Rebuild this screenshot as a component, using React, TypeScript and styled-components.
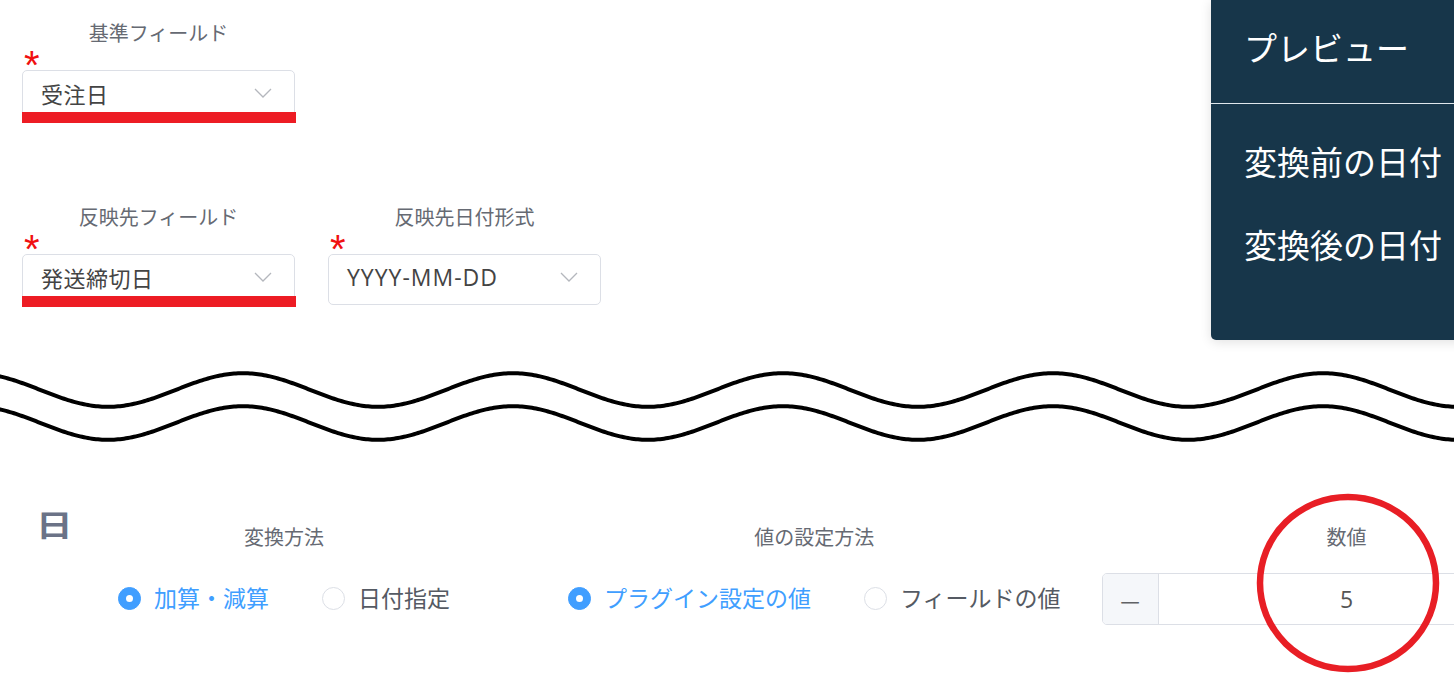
import React from 'react';
import styled, { createGlobalStyle } from 'styled-components';

const blue = '#409eff';
const borderGray = '#dcdfe6';
const labelGray = '#666a73';
const markRed = '#ed1c24';

const GlobalStyle = createGlobalStyle`
  html, body {
    margin: 0;
    padding: 0;
    background: #ffffff;
    overflow: hidden;
  }
  body {
    font-family: 'Noto Sans CJK JP', 'Noto Sans', sans-serif;
  }
`;

const Page = styled.div`
  position: relative;
  width: 1454px;
  height: 696px;
  overflow: hidden;
  background: #ffffff;
`;

const TopForm = styled.div`
  display: flex;
  flex-direction: column;
  gap: 84px;
  padding: 21px 0 0 22px;
`;

const FieldRow = styled.div`
  display: flex;
  gap: 33px;
`;

const Field = styled.div`
  display: flex;
  flex-direction: column;
  width: 273px;
`;

const FieldLabel = styled.div`
  font-size: 20px;
  line-height: 24px;
  color: ${labelGray};
  text-align: center;
`;

const Required = styled.div`
  height: 25px;
  font-family: 'Liberation Sans', sans-serif;
  font-size: 40px;
  line-height: 40px;
  color: #f01010;
  padding-left: 2px;
  overflow: visible;
`;

const SelectBox = styled.div`
  position: relative;
  box-sizing: border-box;
  height: 51px;
  display: flex;
  align-items: center;
  justify-content: space-between;
  padding: 0 22px 5px 18px;
  border: 1px solid ${borderGray};
  border-radius: 5px;
  background: #ffffff;
  font-size: 22px;
  color: #444;
`;

const SelectText = styled.span<{ $latin?: boolean }>`
  font-family: ${p => (p.$latin ? "'Open Sans', 'Noto Sans', sans-serif" : 'inherit')};
  font-size: ${p => (p.$latin ? '23px' : '22px')};
  letter-spacing: ${p => (p.$latin ? '1px' : '0.5px')};
`;

const RedBar = styled.div`
  position: absolute;
  left: -1px;
  right: -2px;
  bottom: -3px;
  height: 11px;
  background: ${markRed};
`;

const Chevron = () => (
  <svg width="18" height="10" viewBox="0 0 18 10">
    <path d="M1 1 L9 9 L17 1" fill="none" stroke="#b4b7bd" strokeWidth="1.3" />
  </svg>
);

const Preview = styled.div`
  position: absolute;
  top: 0;
  left: 1211px;
  width: 320px;
  height: 340px;
  background: #17364a;
  border-bottom-left-radius: 5px;
  box-shadow: 0 2px 12px rgba(0, 0, 0, 0.12);
  color: #ffffff;
`;

const PreviewHead = styled.div`
  height: 104px;
  padding: 25px 0 0 33px;
  box-sizing: border-box;
  border-bottom: 1px solid #dfe7ec;
  font-size: 33px;
  line-height: 44px;
`;

const PreviewBody = styled.div`
  display: flex;
  flex-direction: column;
  gap: 39px;
  padding: 35px 0 0 33px;
  font-size: 33px;
  line-height: 44px;
`;

const WaveSvg = styled.svg`
  display: block;
  margin-top: 55px;
`;

const BottomRow = styled.div`
  display: flex;
  align-items: flex-start;
  padding: 58px 0 0 36px;
`;

const DayHeading = styled.div`
  width: 30px;
  font-size: 30px;
  font-weight: 700;
  line-height: 30px;
  color: #6b7387;
  transform: scaleX(1.22);
  transform-origin: left center;
`;

const Column = styled.div<{ $ml: number; $width?: number }>`
  display: flex;
  flex-direction: column;
  align-items: center;
  gap: 24px;
  margin-top: 17px;
  margin-left: ${p => p.$ml}px;
  ${p => (p.$width ? `width: ${p.$width}px; flex-shrink: 0;` : '')}
`;

const ColumnLabel = styled.div`
  font-size: 20px;
  line-height: 24px;
  color: ${labelGray};
`;

const RadioGroup = styled.div`
  display: flex;
  align-items: center;
  height: 52px;
  gap: 53px;
`;

const RadioOption = styled.label<{ $checked?: boolean }>`
  display: flex;
  align-items: center;
  gap: 13px;
  font-size: 23px;
  line-height: 30px;
  padding-bottom: 4px;
  color: ${p => (p.$checked ? blue : '#555a63')};
  white-space: nowrap;
`;

const RadioDot = styled.span<{ $checked?: boolean }>`
  box-sizing: border-box;
  width: 23px;
  height: 23px;
  margin-top: 3px;
  border-radius: 50%;
  border: 1px solid ${p => (p.$checked ? blue : borderGray)};
  background: ${p => (p.$checked ? blue : '#ffffff')};
  display: flex;
  align-items: center;
  justify-content: center;

  &::after {
    content: '';
    width: 7px;
    height: 7px;
    border-radius: 50%;
    background: #ffffff;
    display: ${p => (p.$checked ? 'block' : 'none')};
  }
`;

const NumberInput = styled.div`
  box-sizing: border-box;
  display: flex;
  width: 490px;
  height: 52px;
  border: 1px solid ${borderGray};
  border-radius: 5px;
  overflow: hidden;
`;

const StepButton = styled.div<{ $side: 'left' | 'right' }>`
  width: 55px;
  flex-shrink: 0;
  display: flex;
  align-items: center;
  justify-content: center;
  background: #f5f7fa;
  ${p => (p.$side === 'left' ? `border-right: 1px solid ${borderGray};` : `border-left: 1px solid ${borderGray};`)}
  color: #606266;
  font-size: 22px;
`;

const NumberValue = styled.div`
  flex: 1;
  display: flex;
  align-items: center;
  justify-content: center;
  font-family: 'Open Sans', 'Noto Sans', sans-serif;
  font-size: 23px;
  color: #555;
`;

const Ellipse = styled.svg`
  position: absolute;
  left: 1250px;
  top: 488px;
  overflow: visible;
`;

const wavePath = (center: number, amp: number, period: number, peakX: number, width: number) => {
  const pts: string[] = [];
  for (let x = -2; x <= width + 2; x += 2) {
    const y = center - amp * Math.cos((2 * Math.PI * (x - peakX)) / period);
    pts.push(`${x},${y.toFixed(2)}`);
  }
  return 'M' + pts.join(' L');
};

type Opt = { text: string; checked?: boolean };

const Radios = ({ options }: { options: Opt[] }) => (
  <RadioGroup>
    {options.map(o => (
      <RadioOption key={o.text} $checked={o.checked}>
        <RadioDot $checked={o.checked} />
        {o.text}
      </RadioOption>
    ))}
  </RadioGroup>
);

const SelectField = ({ label, value, marked, latin }: { label: string; value: string; marked?: boolean; latin?: boolean }) => (
  <Field>
    <FieldLabel>{label}</FieldLabel>
    <Required>*</Required>
    <SelectBox>
      <SelectText $latin={latin}>{value}</SelectText>
      <Chevron />
      {marked && <RedBar />}
    </SelectBox>
  </Field>
);

export default function App() {
  return (
    <Page>
      <GlobalStyle />
      <TopForm>
        <FieldRow>
          <SelectField label="基準フィールド" value="受注日" marked />
        </FieldRow>
        <FieldRow>
          <SelectField label="反映先フィールド" value="発送締切日" marked />
          <SelectField label="反映先日付形式" value="YYYY-MM-DD" latin />
        </FieldRow>
      </TopForm>

      <WaveSvg width="1454" height="90" viewBox="0 0 1454 90">
        <path d={wavePath(30, 16.8, 270, 243, 1454)} fill="none" stroke="#000" strokeWidth="4" />
        <path d={wavePath(63, 16.8, 270, 243, 1454)} fill="none" stroke="#000" strokeWidth="4" />
      </WaveSvg>

      <BottomRow>
        <DayHeading>日</DayHeading>
        <Column $ml={52}>
          <ColumnLabel>変換方法</ColumnLabel>
          <Radios options={[{ text: '加算・減算', checked: true }, { text: '日付指定' }]} />
        </Column>
        <Column $ml={118}>
          <ColumnLabel>値の設定方法</ColumnLabel>
          <Radios options={[{ text: 'プラグイン設定の値', checked: true }, { text: 'フィールドの値' }]} />
        </Column>
        <Column $ml={41} $width={490}>
          <ColumnLabel>数値</ColumnLabel>
          <NumberInput>
            <StepButton $side="left">—</StepButton>
            <NumberValue>5</NumberValue>
            <StepButton $side="right" />
          </NumberInput>
        </Column>
      </BottomRow>

      <Preview>
        <PreviewHead>プレビュー</PreviewHead>
        <PreviewBody>
          <div>変換前の日付</div>
          <div>変換後の日付</div>
        </PreviewBody>
      </Preview>

      <Ellipse width="196" height="190" viewBox="0 0 196 190">
        <ellipse cx="98" cy="95" rx="88" ry="86" fill="none" stroke="#e81e25" strokeWidth="6.5" />
      </Ellipse>
    </Page>
  );
}
